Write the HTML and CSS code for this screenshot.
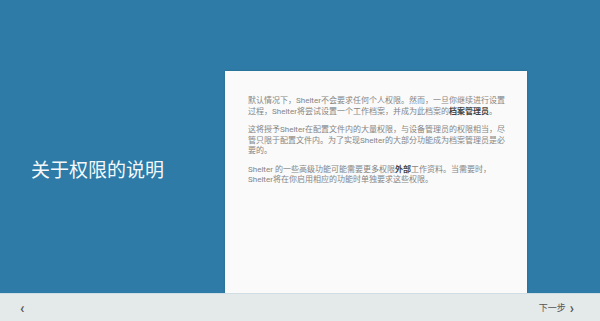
FILE: index.html
```html
<!DOCTYPE html>
<html lang="zh-CN">
<head>
<meta charset="utf-8">
<title>关于权限的说明</title>
<link rel="stylesheet" href="styles.css">
</head>
<body>
<div class="page">
  <div class="main">
    <div class="side">
      <h1 class="title">关于权限的说明</h1>
    </div>
    <div class="card">
      <p class="para">默认情况下，Shelter不会要求任何个人权限。然而，一旦你继续进行设置过程，Shelter将尝试设置一个工作档案，并成为此档案的<b>档案管理员</b>。</p>
      <p class="para">这将授予Shelter在配置文件内的大量权限，与设备管理员的权限相当，尽管只限于配置文件内。为了实现Shelter的大部分功能成为档案管理员是必要的。</p>
      <p class="para">Shelter 的一些高级功能可能需要更多权限<b>外部</b>工作资料。当需要时，Shelter将在你启用相应的功能时单独要求这些权限。</p>
    </div>
    <div class="gutter"></div>
  </div>
  <div class="nav">
    <span class="back">‹</span>
    <span class="next">下一步 <span class="chev">›</span></span>
  </div>
</div>
</body>
</html>
```
FILE: styles.css
```css
html, body {
  margin: 0;
  padding: 0;
}
body {
  font-family: Roboto, "Noto Sans CJK SC", sans-serif;
  width: 600px;
  height: 321px;
  overflow: hidden;
}
.page {
  display: flex;
  flex-direction: column;
  height: 321px;
}
.main {
  flex: 1;
  display: flex;
  background: #2d7ba6;
}
.side {
  width: 225px;
  padding: 158px 0 0 31px;
  box-sizing: border-box;
}
.title {
  margin: 0;
  font-size: 19px;
  line-height: 26px;
  font-weight: 400;
  color: #f4f8fb;
  white-space: nowrap;
}
.card {
  width: 302px;
  margin-top: 71px;
  background: #fafafa;
  box-sizing: border-box;
  padding: 25px 20px 0 23px;
  box-shadow: 0 0 2px rgba(0,0,0,0.15);
}
.para {
  margin: 0 0 8px 0;
  font-size: 8px;
  line-height: 10.5px;
  color: #858585;
}
.para b {
  color: #444;
  font-weight: 700;
}
.gutter {
  flex: 1;
}
.nav {
  height: 28px;
  background: #e4e9ea;
  border-top: 1px solid #cfdde4;
  box-sizing: border-box;
  display: flex;
  align-items: center;
  justify-content: space-between;
  padding: 0 26px 0 20px;
  color: #555;
}
.back {
  font-size: 14px;
  font-weight: 700;
  line-height: 1;
}
.next {
  font-size: 9px;
  color: #555;
  display: flex;
  align-items: center;
  gap: 4px;
}
.chev {
  font-size: 14px;
  font-weight: 700;
  line-height: 1;
}
```
